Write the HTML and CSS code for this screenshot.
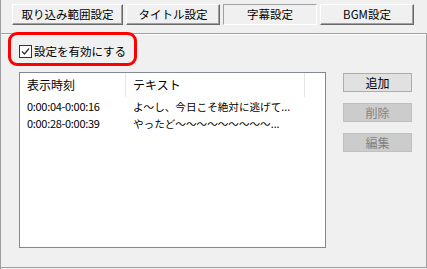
FILE: index.html
```html
<!DOCTYPE html>
<html lang="ja">
<head>
    <meta charset="UTF-8">
    <title>字幕設定</title>
    <link rel="stylesheet" href="styles.css">
</head>
<body>
    <div class="window">
        <div class="tabs">
            <button class="tab tab-wide">取り込み範囲設定</button>
            <button class="tab">タイトル設定</button>
            <button class="tab tab-active">字幕設定</button>
            <button class="tab">BGM設定</button>
        </div>

        <div class="panel">
            <div class="highlight">
                <label class="check">
                    <span class="box">
                        <svg width="11" height="11" viewBox="0 0 11 11">
                            <path d="M2 5.5 L4.5 8 L9 2.5" fill="none" stroke="#333" stroke-width="1.3"/>
                        </svg>
                    </span>
                    設定を有効にする
                </label>
            </div>

            <div class="content">
                <div class="list">
                    <div class="list-head">
                        <div class="col col-time">表示時刻</div>
                        <div class="col col-text">テキスト</div>
                    </div>
                    <div class="row">
                        <div class="col col-time">0:00:04-0:00:16</div>
                        <div class="col col-text">よ～し、今日こそ絶対に逃げて...</div>
                    </div>
                    <div class="row">
                        <div class="col col-time">0:00:28-0:00:39</div>
                        <div class="col col-text">やったど～～～～～～～～～...</div>
                    </div>
                </div>

                <div class="actions">
                    <button class="btn">追加</button>
                    <button class="btn" disabled>削除</button>
                    <button class="btn" disabled>編集</button>
                </div>
            </div>
        </div>
    </div>
</body>
</html>
```

FILE: styles.css
```css
body {
    margin: 0;
    background-color: #f0f0f0;
    font-family: "Noto Sans CJK JP", "DejaVu Sans", sans-serif;
    font-size: 12px;
    color: #000;
}
.window {
    width: 427px;
    height: 269px;
    box-sizing: border-box;
    border-left: 1px solid #a0a0a0;
    display: flex;
    flex-direction: column;
}
.tabs {
    display: flex;
    gap: 3px;
    padding: 4px 0 0 11px;
    height: 30px;
    box-sizing: border-box;
}
.tab {
    width: 94px;
    height: 21px;
    padding: 0;
    font-family: inherit;
    font-size: 11.5px;
    line-height: 17px;
    background-color: #f0f0f0;
    border: 1px solid;
    border-color: #ffffff #696969 #696969 #ffffff;
    box-shadow: inset -1px -1px 0 #a0a0a0;
}
.tab-wide {
    width: 111px;
}
.tab-active {
    border-color: #a0a0a0 #ffffff #ffffff #a0a0a0;
    box-shadow: none;
}
.panel {
    flex: 1;
    border-top: 1px solid #a0a0a0;
    border-right: 1px solid #a0a0a0;
    border-bottom: 1px solid #a0a0a0;
    margin-top: 3px;
    margin-bottom: 1px;
    box-shadow: inset 0 1px 0 #ffffff;
}
.highlight {
    width: 115px;
    height: 28px;
    margin: -2px 0 0 7px;
    border: 3px solid #ff0000;
    border-radius: 9px;
    display: flex;
    align-items: center;
    padding-left: 8px;
}
.check {
    display: flex;
    align-items: center;
    gap: 2px;
    margin-top: 4px;
    font-size: 11.5px;
}
.box {
    width: 11px;
    height: 11px;
    border: 1px solid #333;
    background-color: #fff;
    display: flex;
}
.content {
    display: flex;
    margin: 6px 0 0 18px;
}
.list {
    width: 305px;
    height: 174px;
    border: 1px solid #828790;
    background-color: #fff;
}
.list-head {
    display: flex;
    height: 24px;
    line-height: 24px;
    margin-bottom: 1px;
}
.list-head .col-time {
    border-right: 1px solid #e5e5e5;
}
.list-head .col-text {
    width: 179px;
    flex: none;
    border-right: 1px solid #e5e5e5;
}
.row {
    display: flex;
    height: 17px;
    line-height: 17px;
    font-size: 11px;
}
.row .col-time {
    letter-spacing: -0.3px;
}
.row .col-text {
    font-size: 10.6px;
}
.col {
    padding-left: 7px;
    box-sizing: border-box;
    white-space: nowrap;
    overflow: hidden;
}
.col-time {
    width: 106px;
}
.col-text {
    flex: 1;
}
.actions {
    display: flex;
    flex-direction: column;
    gap: 11px;
    margin: 1px 0 0 17px;
}
.btn {
    width: 69px;
    height: 19px;
    padding: 0;
    font-family: inherit;
    font-size: 12px;
    line-height: 15px;
    background-color: #e1e1e1;
    border: 1px solid #adadad;
    color: #000;
}
.btn:disabled {
    background-color: #cccccc;
    border-color: #bfbfbf;
    color: #838383;
}
```
